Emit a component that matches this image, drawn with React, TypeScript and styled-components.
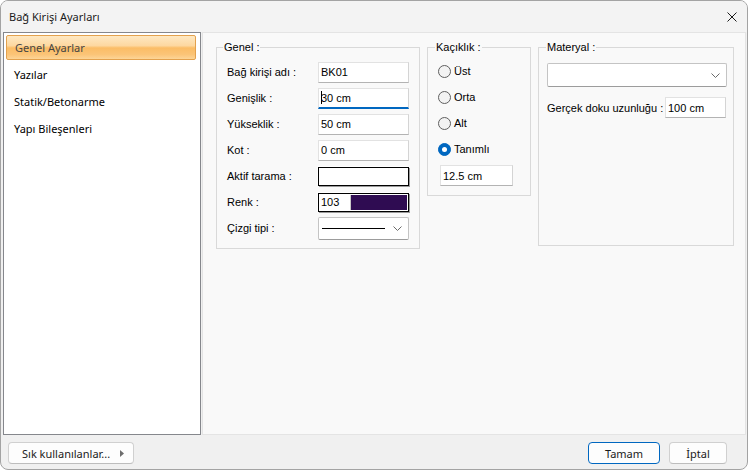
import React from "react";
import styled, { createGlobalStyle } from "styled-components";

const uiFont = `"Noto Sans", "DejaVu Sans", sans-serif`;
const formFont = `"Liberation Sans", Arial, sans-serif`;

const Global = createGlobalStyle`
  html, body { margin: 0; padding: 0; background: #ffffff; }
  body { width: 748px; height: 470px; overflow: hidden; }
  * { box-sizing: border-box; }
`;

const Window = styled.div`
  width: 748px;
  height: 470px;
  display: flex;
  flex-direction: column;
  background: #f0f0f0;
  border: 1px solid #a3a3a3;
  border-radius: 8px;
  overflow: hidden;
  font-family: ${uiFont};
  color: #000;
`;

const TitleBar = styled.div`
  height: 31px;
  flex: none;
  display: flex;
  align-items: center;
  justify-content: space-between;
  padding: 0 10px 0 8px;
  background: #f3f3f3;
  font-size: 11px;
  color: #1a1a1a;
`;

const CloseButton = styled.div`
  width: 10px;
  height: 10px;
  display: flex;
`;

const Body = styled.div`
  height: 403px;
  flex: none;
  display: flex;
  gap: 1px;
  padding: 0 1px 0 2px;
`;

const NavList = styled.div`
  width: 198px;
  flex: none;
  background: #ffffff;
  border: 1px solid #85878c;
  padding-top: 1px;
  display: flex;
  flex-direction: column;
`;

const NavItem = styled.div`
  height: 27px;
  padding: 1px 4px 1px 2px;
  display: flex;
`;

const NavFace = styled.div<{ $selected?: boolean }>`
  flex: 1;
  display: flex;
  align-items: center;
  padding-left: ${(p) => (p.$selected ? "8px" : "7px")};
  font-size: 11px;
  color: ${(p) => (p.$selected ? "#454545" : "#000")};
  border: 1px solid ${(p) => (p.$selected ? "#e3a14d" : "transparent")};
  border-radius: 2px;
  background: ${(p) =>
    p.$selected
      ? "linear-gradient(#fee8c2 0%, #fdd8a0 42%, #fbbd66 52%, #fbc477 80%, #fdd597 100%)"
      : "transparent"};
`;

const Panel = styled.div`
  flex: 1;
  background: #f9f9f9;
  border: 1px solid #e4e4e4;
  padding: 7px 0 0 13px;
  display: flex;
  align-items: flex-start;
  gap: 7px;
  font-family: ${formFont};
  font-size: 11px;
`;

const Group = styled.fieldset<{ $w: number; $h?: number; $pl: number; $pt: number; $pr: number; $pb: number }>`
  margin: 0;
  width: ${(p) => p.$w}px;
  ${(p) => (p.$h ? `height: ${p.$h}px;` : "")}
  min-width: 0;
  border: 1px solid #d9d9d9;
  padding: ${(p) => `${p.$pt}px ${p.$pr}px ${p.$pb}px ${p.$pl}px`};
`;

const Caption = styled.legend<{ $shift: number }>`
  padding: 0 1px;
  margin-left: ${(p) => p.$shift}px;
  line-height: 14px;
  font-size: 11px;
`;

const FormGrid = styled.div`
  display: grid;
  grid-template-columns: 91px 91px;
  grid-auto-rows: 26px;
  align-items: center;
`;

const FieldLabel = styled.span`
  white-space: nowrap;
`;

const TextBox = styled.div<{ $w?: number; $focused?: boolean }>`
  width: ${(p) => (p.$w ? `${p.$w}px` : "100%")};
  height: 21px;
  background: #ffffff;
  border: 1px solid #e2e2e2;
  border-right-color: #d4d4d4;
  border-bottom: ${(p) => (p.$focused ? "2px solid #0067c0" : "1px solid #b3b3b3")};
  padding-left: 2px;
  display: flex;
  align-items: center;
  white-space: nowrap;
`;

const Caret = styled.span`
  width: 1px;
  height: 13px;
  background: #000;
  margin-right: -1px;
`;

const SwatchFrame = styled.div`
  height: 19px;
  border: 1px solid #000;
  box-shadow: 1px 1px 0 #9a9a9a, -1px -1px 0 #ffffff;
  background: #ffffff;
  padding: 1px;
  display: flex;
`;

const ColorCode = styled.span`
  width: 31px;
  display: flex;
  align-items: center;
  padding-left: 1px;
  border-right: 1px solid #c8c8c8;
  background: #ffffff;
`;

const ColorFill = styled.span<{ $c: string }>`
  flex: 1;
  background: ${(p) => p.$c};
`;

const Combo = styled.div<{ $h: number }>`
  height: ${(p) => p.$h}px;
  background: #ffffff;
  border: 1px solid #c4c4c4;
  border-bottom-color: #9c9c9c;
  border-radius: 2px;
  display: flex;
  align-items: center;
  padding: 0 6px 0 3px;
  gap: 4px;
`;

const LineSample = styled.span`
  width: 63px;
  height: 1px;
  background: #000;
`;

const ComboFill = styled.span`
  flex: 1;
`;

const RadioRow = styled.label`
  height: 26px;
  display: flex;
  align-items: center;
  gap: 3px;
`;

const RadioDot = styled.span<{ $on?: boolean }>`
  width: 13px;
  height: 13px;
  border-radius: 50%;
  flex: none;
  background: ${(p) => (p.$on ? "#0067c0" : "#f3f3f3")};
  border: 1px solid ${(p) => (p.$on ? "#0067c0" : "#5f5f5f")};
  display: flex;
  align-items: center;
  justify-content: center;
  &::after {
    content: "";
    width: 5px;
    height: 5px;
    border-radius: 50%;
    background: #ffffff;
    display: ${(p) => (p.$on ? "block" : "none")};
  }
`;

const OffsetBox = styled.div`
  margin: 3px 0 0 2px;
`;

const MatRow = styled.div`
  margin-top: 10px;
  display: flex;
  align-items: center;
  justify-content: space-between;
  padding-right: 1px;
`;

const Footer = styled.div`
  flex: 1;
  display: flex;
  align-items: flex-start;
  padding: 7px 20px 0 7px;
  gap: 9px;
`;

const Button = styled.div<{ $w: number; $primary?: boolean }>`
  width: ${(p) => p.$w}px;
  height: 22px;
  background: #fdfdfd;
  border: 1px solid ${(p) => (p.$primary ? "#0067c0" : "#d0d0d0")};
  border-bottom-color: ${(p) => (p.$primary ? "#0067c0" : "#bdbdbd")};
  border-radius: 4px;
  display: flex;
  align-items: center;
  justify-content: center;
  font-size: 11px;
  color: #1a1a1a;
`;

const MenuButton = styled(Button)`
  justify-content: space-between;
  padding: 0 9px 0 13px;
`;

const Spacer = styled.div`
  flex: 1;
`;

const Chevron = () => (
  <svg width="9" height="5" viewBox="0 0 9 5">
    <path d="M0.5 0.5 L4.5 4.5 L8.5 0.5" fill="none" stroke="#6a6a6a" strokeWidth="1" />
  </svg>
);

export default function App() {
  return (
    <>
      <Global />
      <Window>
        <TitleBar>
          <span>Bağ Kirişi Ayarları</span>
          <CloseButton>
            <svg width="10" height="10" viewBox="0 0 10 10">
              <path d="M0.5 0.5 L9.5 9.5 M9.5 0.5 L0.5 9.5" stroke="#1a1a1a" strokeWidth="1" />
            </svg>
          </CloseButton>
        </TitleBar>
        <Body>
          <NavList>
            <NavItem>
              <NavFace $selected>Genel Ayarlar</NavFace>
            </NavItem>
            <NavItem>
              <NavFace>Yazılar</NavFace>
            </NavItem>
            <NavItem>
              <NavFace>Statik/Betonarme</NavFace>
            </NavItem>
            <NavItem>
              <NavFace>Yapı Bileşenleri</NavFace>
            </NavItem>
          </NavList>
          <Panel>
            <Group $w={204} $pl={10} $pr={10} $pt={5} $pb={7}>
              <Caption $shift={-4}>Genel :</Caption>
              <FormGrid>
                <FieldLabel>Bağ kirişi adı :</FieldLabel>
                <TextBox>BK01</TextBox>
                <FieldLabel>Genişlik :</FieldLabel>
                <TextBox $focused>
                  <Caret />
                  30 cm
                </TextBox>
                <FieldLabel>Yükseklik :</FieldLabel>
                <TextBox>50 cm</TextBox>
                <FieldLabel>Kot :</FieldLabel>
                <TextBox>0 cm</TextBox>
                <FieldLabel>Aktif tarama :</FieldLabel>
                <SwatchFrame />
                <FieldLabel>Renk :</FieldLabel>
                <SwatchFrame>
                  <ColorCode>103</ColorCode>
                  <ColorFill $c="#2f0c52" />
                </SwatchFrame>
                <FieldLabel>Çizgi tipi :</FieldLabel>
                <Combo $h={23}>
                  <LineSample />
                  <ComboFill />
                  <Chevron />
                </Combo>
              </FormGrid>
            </Group>
            <Group $w={104} $pl={10} $pr={6} $pt={4} $pb={9}>
              <Caption $shift={-3}>Kaçıklık :</Caption>
              <RadioRow>
                <RadioDot />
                Üst
              </RadioRow>
              <RadioRow>
                <RadioDot />
                Orta
              </RadioRow>
              <RadioRow>
                <RadioDot />
                Alt
              </RadioRow>
              <RadioRow>
                <RadioDot $on />
                Tanımlı
              </RadioRow>
              <OffsetBox>
                <TextBox $w={73}>12.5 cm</TextBox>
              </OffsetBox>
            </Group>
            <Group $w={196} $h={206} $pl={8} $pr={6} $pt={9} $pb={6}>
              <Caption $shift={-1}>Materyal :</Caption>
              <Combo $h={24}>
                <ComboFill />
                <Chevron />
              </Combo>
              <MatRow>
                <FieldLabel>Gerçek doku uzunluğu :</FieldLabel>
                <TextBox $w={61}>100 cm</TextBox>
              </MatRow>
            </Group>
          </Panel>
        </Body>
        <Footer>
          <MenuButton $w={126}>
            <span>Sık kullanılanlar...</span>
            <svg width="4" height="7" viewBox="0 0 4 7">
              <polygon points="0,0 4,3.5 0,7" fill="#6d6d6d" />
            </svg>
          </MenuButton>
          <Spacer />
          <Button $w={72} $primary>
            Tamam
          </Button>
          <Button $w={58}>İptal</Button>
        </Footer>
      </Window>
    </>
  );
}
